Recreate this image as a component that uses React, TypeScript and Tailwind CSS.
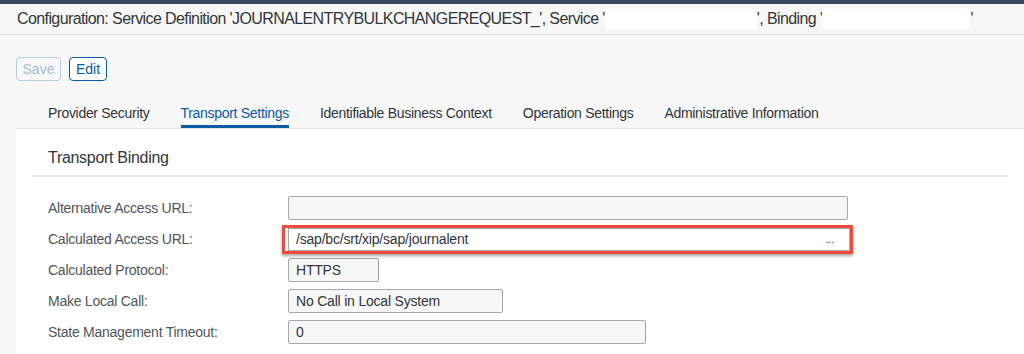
const tabs = [
  "Provider Security",
  "Transport Settings",
  "Identifiable Business Context",
  "Operation Settings",
  "Administrative Information",
];

function Field({ label, width, value, children }: { label: string; width: string; value?: string; children?: React.ReactNode }) {
  return (
    <div className="flex items-center h-[24px]">
      <div className="w-[240px] text-[14px] tracking-[-0.25px] text-[#51555a]">{label}</div>
      {children ?? (
        <div className={`${width} h-[24px] bg-[#f7f7f7] border border-[#a3a8ae] rounded-[2px] px-[7px] flex items-center text-[14px] tracking-[-0.2px] text-[#32363a]`}>
          {value}
        </div>
      )}
    </div>
  );
}

export default function App() {
  return (
    <div className="w-[1024px] h-[354px] overflow-hidden bg-[#f7f7f7] font-['Liberation_Sans',Arial,sans-serif]">
      <div className="h-[4px] bg-[#354a5f]" />
      <div className="h-[31px] border-b border-[#e1e1e1] pl-[17px] flex items-center text-[16px] tracking-[-0.6px] text-[#32363a] whitespace-nowrap">
        <span>Configuration: Service Definition 'JOURNALENTRYBULKCHANGEREQUEST_', Service '</span>
        <span className="inline-block w-[152px] h-[20px] bg-white" />
        <span>', Binding '</span>
        <span className="inline-block w-[148px] h-[20px] bg-white" />
        <span>'</span>
      </div>

      <div className="flex gap-[8px] pl-[16px] pt-[22px]">
        <button className="h-[24px] w-[45px] rounded-[4px] border border-[#b7cde6] text-[#a6bed9] text-[14px]">Save</button>
        <button className="h-[24px] w-[38px] rounded-[4px] border border-[#0a5aa6] text-[#0a5aa6] text-[14px] bg-white">Edit</button>
      </div>

      <div className="ml-[16px] mt-[17px] border-b border-[#e1e1e1] flex gap-[31px] pl-[32px]">
        {tabs.map((t, i) => (
          <div
            key={t}
            className={`h-[30px] pt-[3px] flex items-center text-[14px] tracking-[-0.3px] whitespace-nowrap border-b-[3px] ${
              i === 1 ? "border-[#0a5aa6] text-[#0a5aa6]" : "border-transparent text-[#32363a]"
            }`}
          >
            {t}
          </div>
        ))}
      </div>

      <div className="ml-[16px] bg-white h-[230px] px-[16px]">
        <div className="h-[48px] flex items-end pb-[7px] pl-[16px] border-b-2 border-[#e8e8e8] text-[16px] tracking-[-0.3px] leading-[20px] text-[#32363a]">
          Transport Binding
        </div>
        <div className="pl-[16px] pt-[19px] flex flex-col gap-[7px]">
          <Field label="Alternative Access URL:" width="w-[560px]" />
          <Field label="Calculated Access URL:" width="w-[562px]">
            <div className="relative">
              <div className="absolute -left-[6px] -top-[3px] w-[571px] h-[29px] border-[3px] border-[#f0493e] shadow-[0_2px_3px_rgba(0,0,0,0.35)]" />
              <div className="w-[562px] h-[23px] bg-white border border-[#a3a8ae] px-[7px] flex items-center justify-between text-[14px] tracking-[-0.2px] text-[#32363a]">
                <span>/sap/bc/srt/xip/sap/journalent</span>
                <span className="pr-[8px] text-[11px]">...</span>
              </div>
            </div>
          </Field>
          <Field label="Calculated Protocol:" width="w-[91px]" value="HTTPS" />
          <Field label="Make Local Call:" width="w-[215px]" value="No Call in Local System" />
          <Field label="State Management Timeout:" width="w-[358px]" value="0" />
        </div>
      </div>
    </div>
  );
}
